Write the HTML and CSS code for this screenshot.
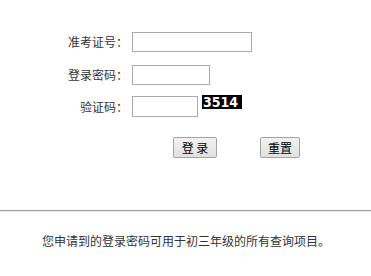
FILE: index.html
```html
<!DOCTYPE html>
<html lang="zh">
<head>
<meta charset="utf-8">
<link rel="stylesheet" href="styles.css">
</head>
<body>
<div class="form">
  <div class="row r1">
    <label class="lbl">准考证号：</label>
    <input class="inp w1" type="text">
  </div>
  <div class="row r2">
    <label class="lbl">登录密码：</label>
    <input class="inp w2" type="password">
  </div>
  <div class="row r3">
    <label class="lbl">验证码：</label>
    <input class="inp w3" type="text">
    <span class="captcha">3514</span>
  </div>
  <div class="btns">
    <button class="btn b1">登 录</button>
    <button class="btn b2">重置</button>
  </div>
</div>
<hr class="sep">
<p class="note">您申请到的登录密码可用于初三年级的所有查询项目。</p>
</body>
</html>
```
FILE: styles.css
```css
html, body {
  margin: 0;
  padding: 0;
  background: #fff;
}
body {
  font-family: "Noto Sans CJK SC", "Noto Sans", sans-serif;
  font-size: 12px;
  color: #333;
}
.form {
  padding-top: 32px;
  height: 178px;
  box-sizing: border-box;
}
.row {
  display: flex;
  align-items: flex-start;
  height: 20px;
}
.r2 { margin-top: 13px; }
.r3 { margin-top: 11px; height: 21px; }
.lbl {
  text-align: right;
  line-height: 20px;
  padding-right: 4px;
  box-sizing: border-box;
  width: 132px;
  white-space: nowrap;
}
.r3 .lbl { line-height: 22px; }
.inp {
  height: 20px;
  border: 1px solid #a9a9a9;
  box-sizing: border-box;
  padding: 0 2px;
  margin: 0;
  font-size: 12px;
  background: #fff;
}
.w1 { width: 120px; }
.w2 { width: 78px; }
.w3 { width: 66px; height: 21px; }
.captcha {
  margin-left: 4px;
  margin-top: -1px;
  background: #000;
  color: #fff;
  font-family: "DejaVu Sans Condensed", "DejaVu Sans", sans-serif;
  font-stretch: condensed;
  font-weight: bold;
  font-size: 14px;
  line-height: 14px;
  height: 14px;
  width: 40px;
  padding-left: 1px;
  box-sizing: border-box;
  white-space: nowrap;
}
.btns {
  display: flex;
  margin-top: 20px;
  padding-left: 173px;
}
.btn {
  height: 21px;
  margin: 0;
  padding: 0;
  border: 1px solid #a3a3a3;
  border-radius: 2px;
  background: linear-gradient(#f2f2f2, #e0e0e0);
  font-family: "Noto Sans CJK SC", sans-serif;
  font-size: 12px;
  color: #000;
  line-height: 19px;
}
.b1 { width: 44px; }
.b2 { width: 40px; margin-left: 43px; }
.sep {
  margin: 32px 0 0;
  border: 0;
  border-top: 1px solid #a0a0a0;
  height: 1px;
  background: #e8e8e8;
}
.note {
  margin: 22px 0 0;
  padding-left: 42px;
  line-height: 14px;
  color: #333;
}
```
